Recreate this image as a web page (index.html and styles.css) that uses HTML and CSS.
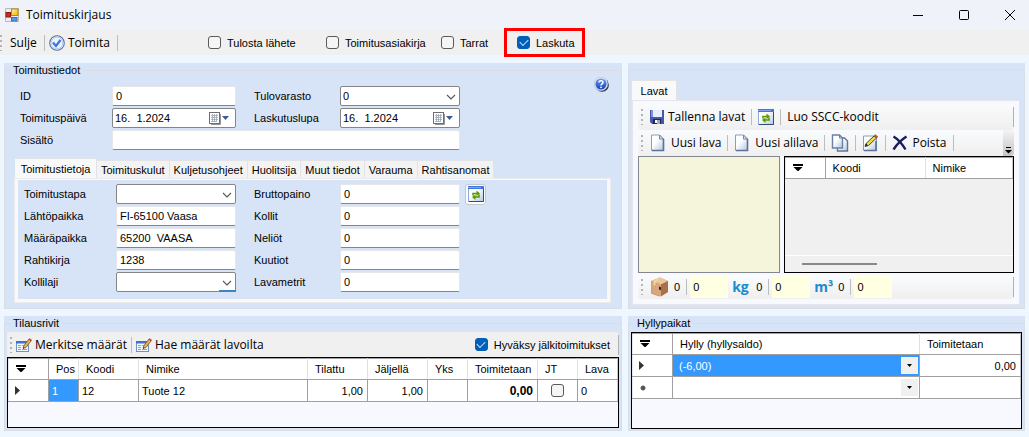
FILE: index.html
```html
<!DOCTYPE html>
<html lang="fi">
<head>
<meta charset="utf-8">
<title>Toimituskirjaus</title>
<link rel="stylesheet" href="styles.css">
</head>
<body>
<svg class="defs" aria-hidden="true">
  <defs>
    <linearGradient id="gy" x1="0" y1="0" x2="1" y2="1"><stop offset="0" stop-color="#fff3a0"/><stop offset="1" stop-color="#f5b400"/></linearGradient>
    <linearGradient id="gp" x1="0" y1="0" x2="1" y2="1"><stop offset="0.4" stop-color="#fdfeff"/><stop offset="1" stop-color="#b4c6e2"/></linearGradient>
    <linearGradient id="gb" x1="0" y1="0" x2="0" y2="1"><stop offset="0" stop-color="#6f9bf0"/><stop offset="1" stop-color="#1742b8"/></linearGradient>
  </defs>
  <symbol id="refresh" viewBox="0 0 16 16">
    <rect x="0.5" y="0.5" width="15" height="15" fill="url(#gp)" stroke="#8fa9d8"/>
    <path d="M0 0h16v3H0z" fill="#3f76dc"/><path d="M0 1h13v1H0z" fill="#7ea6f0"/>
    <path d="M15.5 3v12.5H1" fill="none" stroke="#2e4c7c"/>
    <path d="M5 9.500V7.500h4M11 8.500v2.500H7" fill="none" stroke="#5b9a00" stroke-width="1.600"/>
    <path d="M8.500 4.500l3.500 3-3.500 2.500zM7.500 8.500l-3.500 2.500 3.500 3z" fill="#5b9a00"/>
  </symbol>
  <symbol id="page" viewBox="0 0 16 18">
    <path d="M1.500 1h8l4 4v11.500h-12z" fill="url(#gp)" stroke="#8c9dba"/>
    <path d="M9.500 1v4h4z" fill="#d7e1f0" stroke="#7286a8"/>
    <path d="M13.500 5v11.500H2" fill="none" stroke="#5c7196" stroke-width="1.600"/>
  </symbol>
  <symbol id="edit" viewBox="0 0 16 14">
    <rect x="0.500" y="3.500" width="12" height="10" fill="#f3f8ff" stroke="#6f90c8"/>
    <path d="M0 3h13v2.500H0z" fill="#3e74c8"/>
    <path d="M2 7.500h3M2 9.500h3M2 11.500h3M6 7.500h3M6 11.500h5" stroke="#7ea3dc"/>
    <path d="M7 10.500l1-3 5-6.500 2.300 1.500-5.300 7z" fill="#e4b055" stroke="#7a5326" stroke-width="0.800"/>
    <path d="M12.500 1.500l1-1.300 2.300 1.500-1 1.500z" fill="#c8443a"/><path d="M7 10.500l.5-1.500 1 .9z" fill="#222"/>
  </symbol>
  <symbol id="filter" viewBox="0 0 10 8"><path d="M0 0h10v2H0zM0.500 3h9L5.500 7h-1z" fill="#000"/></symbol>
  <symbol id="chev" viewBox="0 0 10 6"><path d="M1 1l4 4 4-4" fill="none" stroke="#555" stroke-width="1.100"/></symbol>
  <symbol id="calendar" viewBox="0 0 20 13">
    <rect x="0.500" y="0.500" width="10" height="11" fill="#fff" stroke="#746c6c"/>
    <path d="M11.500 2v10.500H2" fill="none" stroke="#9a9494"/>
    <path d="M2 3.500h7M2 5.500h7M2 7.500h7M2 9.500h6M3.500 2v8M5.500 2v8M7.500 2v8" stroke="#9aa6b8" stroke-width="0.800"/>
    <path d="M13 4h7l-3.500 4z" fill="#3c5c92"/>
  </symbol>
  <symbol id="drop" viewBox="0 0 5 3"><path d="M0 0h5L2.500 3z" fill="#000"/></symbol>
  <symbol id="row" viewBox="0 0 5 9"><path d="M0 0v9l5-4.500z" fill="#333"/></symbol>
</svg>

<div class="window">
  <header class="titlebar">
    <svg class="app" viewBox="0 0 14 14" width="14" height="14"><path d="M.5.5h13v13H.5z" fill="#eee" stroke="#b8b8b8"/><rect x="6.500" y="1" width="6.500" height="6.500" fill="url(#gy)" stroke="#b98a10"/><rect x="1" y="4.500" width="4.500" height="4.500" fill="#d02818" stroke="#8f1a10"/><rect x="6.500" y="9.500" width="5.500" height="3.500" fill="#5c98ee" stroke="#3c6cc0"/></svg>
    <h1>Toimituskirjaus</h1>
    <div class="wincontrols">
      <button aria-label="Pienennä"><svg width="10" height="10"><path d="M0 5.500h10" stroke="#000"/></svg></button>
      <button aria-label="Suurenna"><svg width="10" height="10"><rect x="0.500" y="0.500" width="9" height="9" rx="1" fill="none" stroke="#000"/></svg></button>
      <button aria-label="Sulje ikkuna"><svg width="10" height="10"><path d="M0 0l10 10M10 0L0 10" stroke="#000"/></svg></button>
    </div>
  </header>

  <div class="commands">
    <i class="grip"></i>
    <button class="tool close">Sulje</button>
    <i class="sep"></i>
    <button class="tool deliver"><svg width="16" height="16" viewBox="0 0 16 16"><circle cx="8" cy="8" r="7.300" fill="#eaf2ff" stroke="#5a7198" stroke-width="1.100"/><circle cx="8" cy="8" r="5.800" fill="none" stroke="#b6cdf2"/><path d="M4 7.500l3 3.500 4.500-6" fill="none" stroke="#3f74e0" stroke-width="2.200"/></svg>Toimita</button>
    <i class="sep"></i>
    <div class="options">
      <label class="check o1"><input type="checkbox">Tulosta lähete</label>
      <label class="check o2"><input type="checkbox">Toimitusasiakirja</label>
      <label class="check o3"><input type="checkbox">Tarrat</label>
      <label class="check marked"><input type="checkbox" checked>Laskuta</label>
    </div>
  </div>

  <main class="panels">
    <section class="panel"><fieldset>
      <legend>Toimitustiedot</legend>
      <div class="top">
        <div class="form head">
          <label for="id">ID</label><input class="box" id="id" value="0">
          <label class="second" for="tv">Tulovarasto</label><span class="combo"><select id="tv"><option>0</option></select><svg><use href="#chev"/></svg></span>
          <label for="tp">Toimituspäivä</label><span class="combo date"><input id="tp" value="16.  1.2024"><svg><use href="#calendar"/></svg></span>
          <label class="second" for="ll">Laskutuslupa</label><span class="combo date"><input id="ll" value="16.  1.2024"><svg><use href="#calendar"/></svg></span>
          <label for="si">Sisältö</label><input class="box wide" id="si">
        </div>
        <button class="help" aria-label="Ohje"><svg width="15" height="15" viewBox="0 0 15 15"><circle cx="8" cy="8" r="6.800" fill="#1b2238"/><circle cx="7" cy="7" r="6.800" fill="#e8eefc" stroke="#a5b2d0" stroke-width="0.500"/><circle cx="7" cy="7" r="5.600" fill="url(#gb)"/><path d="M5 5.500c0-2.400 4-2.400 4 0 0 1.400-2 1.300-2 3" fill="none" stroke="#fff" stroke-width="1.500"/><circle cx="7" cy="10.300" r="0.900" fill="#fff"/></svg></button>
      </div>
      <div class="tabs" role="tablist">
        <button class="tab active" role="tab" aria-selected="true">Toimitustietoja</button><button class="tab" role="tab">Toimituskulut</button><button class="tab" role="tab">Kuljetusohjeet</button><button class="tab" role="tab">Huolitsija</button><button class="tab" role="tab">Muut tiedot</button><button class="tab" role="tab">Varauma</button><button class="tab" role="tab">Rahtisanomat</button>
      </div>
      <div class="tabpane"><div class="paneinner">
        <div class="form detail">
          <label for="tt">Toimitustapa</label><span class="combo"><select id="tt"><option></option></select><svg><use href="#chev"/></svg></span>
          <label class="second" for="bp">Bruttopaino</label><input class="box" id="bp" value="0">
          <button class="refresh" aria-label="Päivitä"><svg width="16" height="16"><use href="#refresh"/></svg></button>
          <label for="lp">Lähtöpaikka</label><input class="box" id="lp" value="FI-65100 Vaasa">
          <label class="second" for="ko">Kollit</label><input class="box" id="ko" value="0"><i></i>
          <label for="mp">Määräpaikka</label><input class="box" id="mp" value="65200  VAASA">
          <label class="second" for="ne">Neliöt</label><input class="box" id="ne" value="0"><i></i>
          <label for="rk">Rahtikirja</label><input class="box" id="rk" value="1238">
          <label class="second" for="ku">Kuutiot</label><input class="box" id="ku" value="0"><i></i>
          <label for="kl">Kollilaji</label><span class="combo hot"><select id="kl"><option></option></select><svg><use href="#chev"/></svg></span>
          <label class="second" for="lm">Lavametrit</label><input class="box" id="lm" value="0"><i></i>
        </div>
      </div></div>
    </fieldset></section>

    <section class="panel right"><fieldset class="untitled">
      <div class="tabs"><button class="tab active pallet">Lavat</button></div>
      <div class="palletpane">
        <div class="strip">
          <i class="grip"></i>
          <button class="tool"><svg width="14" height="14" viewBox="0 0 14 14"><path d="M0 0h14v14H2l-2-2z" fill="#4656a8"/><path d="M3 0h9v7H3z" fill="#e6edfb"/><path d="M1 0h2v7H1z" fill="#8090d8"/><path d="M3 9h8v5H3z" fill="#20284c"/><path d="M5 10h2v3H5z" fill="#fff"/><path d="M7 10h3v4H7z" fill="#9ba8c8"/></svg>Tallenna lavat</button>
          <i class="sep"></i>
          <button class="tool" aria-label="Päivitä lavat"><svg width="16" height="16"><use href="#refresh"/></svg></button>
          <i class="sep"></i>
          <button class="tool">Luo SSCC-koodit</button>
          <i class="edge"></i>
        </div>
        <div class="strip">
          <i class="grip"></i>
          <button class="tool page"><svg width="16" height="18"><use href="#page"/></svg>Uusi lava</button>
          <i class="sep"></i>
          <button class="tool page"><svg width="16" height="18"><use href="#page"/></svg>Uusi alilava</button>
          <i class="sep"></i>
          <button class="tool" aria-label="Kopioi"><svg width="18" height="18" viewBox="0 0 18 18"><path d="M6.500 4h7l3 3v10h-10z" fill="url(#gp)" stroke="#5f7598" stroke-width="1.400"/><path d="M1.500 1h7l3 3v10h-10z" fill="url(#gp)" stroke="#6c80a2" stroke-width="1.400"/><path d="M8.500 1v3h3" fill="none" stroke="#6c80a2"/></svg></button>
          <i class="sep"></i>
          <button class="tool" aria-label="Muokkaa"><svg width="17" height="18" viewBox="0 0 17 18"><path d="M1.500 2h13v14.500h-13z" fill="url(#gp)" stroke="#8c9dba"/><path d="M14 7v9.500H2" fill="none" stroke="#5c7196" stroke-width="1.600"/><path d="M3 12.500l1-3 8-7.500 2.500 2-8 7.500z" fill="#eedb3c" stroke="#222" stroke-width="0.800"/><path d="M12 1.500l1.200-1.200 3 2.500L15 4z" fill="#e23a28"/><path d="M3 12.500l1-3 2 1.800z" fill="#222"/></svg></button>
          <i class="sep"></i>
          <button class="tool"><svg width="16" height="16" viewBox="0 0 16 16"><path d="M1.500 1.500c5 3 9 8 12 13M14.500 1.500C9 5 5 9 1.500 14.500" fill="none" stroke="#171c5c" stroke-width="2.400"/></svg>Poista</button>
          <i class="sep"></i>
          <button class="overflow" aria-label="Lisää"><svg width="7" height="7" viewBox="0 0 7 7"><path d="M1 0h5v1H1zM0 3h7L3.500 6.500z" fill="#000"/></svg></button>
        </div>
        <div class="lists">
          <div class="tree"></div>
          <div class="grid small">
            <table><colgroup><col class="w40"><col class="w100"><col></colgroup>
            <thead><tr><th><svg class="filter"><use href="#filter"/></svg></th><th>Koodi</th><th>Nimike</th></tr></thead></table>
            <div class="hscroll"><i></i></div>
          </div>
        </div>
        <div class="strip totals">
          <i class="grip"></i>
          <svg width="19" height="20" viewBox="0 0 19 20"><path d="M1 4l9-3.500L18 4v11l-9 4.500-8-3z" fill="#c98f62"/><path d="M1 4l9-3.500L18 4l-7 3.500z" fill="#ecc79e"/><path d="M11 7.500L18 4v11l-7 4.500z" fill="#a96f48"/><path d="M1 4l10 3.500v12L1.500 16z" fill="#d8a67c"/><path d="M8 1.500L4.500 5.300v3" fill="none" stroke="#e9dca0" stroke-width="1.800"/><path d="M9 9.500l2 .7v3l-2-.7z" fill="#322"/></svg>
          <span class="num">0</span><i class="sep"></i><output>0</output>
          <b class="unit">kg</b><span class="num">0</span><i class="sep"></i><output>0</output>
          <b class="unit">m³</b><span class="num">0</span><i class="sep"></i><output>0</output>
          <i class="edge"></i>
        </div>
      </div>
    </fieldset></section>

    <section class="panel lower"><fieldset>
      <legend>Tilausrivit</legend>
      <div class="orders">
        <div class="bar">
          <i class="grip"></i>
          <button class="tool"><svg width="16" height="14"><use href="#edit"/></svg>Merkitse määrät</button>
          <i class="sep"></i>
          <button class="tool"><svg width="16" height="14"><use href="#edit"/></svg>Hae määrät lavoilta</button>
          <label class="check accept"><input type="checkbox" checked>Hyväksy jälkitoimitukset</label>
          <i class="edge"></i>
        </div>
        <div class="grid">
          <table>
            <colgroup><col class="w40"><col class="w30"><col class="w60"><col><col class="w60"><col class="w60"><col class="w40"><col class="w70"><col class="w40"><col class="w40"></colgroup>
            <thead><tr><th><svg class="filter"><use href="#filter"/></svg></th><th>Pos</th><th>Koodi</th><th>Nimike</th><th>Tilattu</th><th>Jäljellä</th><th>Yks</th><th>Toimitetaan</th><th>JT</th><th>Lava</th></tr></thead>
            <tbody><tr><th scope="row"><svg class="rowmark"><use href="#row"/></svg></th><td class="sel">1</td><td>12</td><td>Tuote 12</td><td class="r">1,00</td><td class="r">1,00</td><td></td><td class="r bold">0,00</td><td class="c"><input type="checkbox" aria-label="JT"></td><td>0</td></tr></tbody>
          </table>
        </div>
      </div>
    </fieldset></section>

    <section class="panel lower"><fieldset>
      <legend>Hyllypaikat</legend>
      <div class="grid shelves">
        <table>
          <colgroup><col class="w40"><col><col class="w101"></colgroup>
          <thead><tr><th><svg class="filter"><use href="#filter"/></svg></th><th>Hylly (hyllysaldo)</th><th>Toimitetaan</th></tr></thead>
          <tbody>
            <tr><th scope="row"><svg class="rowmark"><use href="#row"/></svg></th><td class="sel"><div class="pick"><span>(-6,00)</span><button aria-label="Valitse hylly"><svg width="5" height="3"><use href="#drop"/></svg></button></div></td><td class="r">0,00</td></tr>
            <tr><th scope="row"><svg class="new" viewBox="0 0 6 6"><circle cx="3" cy="3" r="2" fill="#444"/><path d="M3 0v6M0 3h6M1 1l4 4M5 1L1 5" stroke="#555" stroke-width="0.800"/></svg></th><td><div class="pick"><span></span><button aria-label="Valitse hylly"><svg width="5" height="3"><use href="#drop"/></svg></button></div></td><td></td></tr>
          </tbody>
        </table>
      </div>
    </fieldset></section>
  </main>
</div>
</body>
</html>
```

FILE: styles.css
```css
* { box-sizing: border-box; }
body { margin: 0; background: #eef7ff; color: #000; font: 11px/14px "Liberation Sans", Arial, sans-serif; }
button, input, select { margin: 0; padding: 0; border: 0; background: none; color: inherit; font: inherit; }
svg { display: block; flex: none; }
.defs { position: absolute; width: 0; height: 0; }
.window { min-height: 100vh; background: #eef7ff; }

.titlebar { display: flex; align-items: center; height: 30px; padding: 0 4px 0 5px; background: #eff3f9; }
.titlebar h1 { margin: 0 0 0 7px; font: 12px/16px "Open Sans", sans-serif; }
.wincontrols { display: flex; gap: 16px; margin-left: auto; }
.wincontrols button { display: grid; place-items: center; width: 30px; height: 28px; }

.commands { display: flex; align-items: center; height: 25px; background: #f0f0f0; }
.grip { flex: none; width: 2px; height: 16px; background: repeating-linear-gradient(#b4b4b4 0 2px, transparent 2px 5px); }
.sep { flex: none; width: 1px; height: 16px; background: #bdbdbd; }
.tool { display: flex; align-items: center; gap: 4px; font: 12px/18px "Open Sans", sans-serif; white-space: nowrap; }
.close { width: 42px; padding-left: 8px; }
.deliver { width: 72px; padding-left: 4px; gap: 3px; }
.options { display: flex; align-items: center; padding-left: 90px; }
.check { display: flex; align-items: center; gap: 6px; white-space: nowrap; }
.o1 { width: 118px; }
.o2 { width: 115px; }
.o3 { width: 66px; }
.marked { position: relative; z-index: 1; width: 75px; height: 23px; padding-left: 10px; outline: 3px solid #f00; }
input[type="checkbox"] { display: grid; place-items: center; flex: none; width: 13px; height: 13px; appearance: none; border: 1px solid #5a5a5a; border-radius: 3px; background: #f5f5f5; }
input[type="checkbox"]:checked { border-color: #005fb8; background: #005fb8; }
input[type="checkbox"]:checked::before { content: ""; width: 7px; height: 4px; margin-bottom: 2px; border: solid #cfe2f4; border-width: 0 0 1px 1px; transform: rotate(-45deg); }

.panels { display: grid; grid-template-columns: 618fr 397fr; gap: 7px 6px; padding: 8px 4px 6px; }
.panel { min-width: 0; background: #d7e4f7; }
fieldset { min-width: 0; height: 100%; margin: 0; padding: 0; border: 1px solid #dadde2; }
legend { margin-left: 6px; padding: 0 2px; line-height: 14px; }
.right { padding-top: 6px; }

.top { display: flex; justify-content: space-between; padding: 0 12px 0 15px; }
.form { display: grid; grid-auto-rows: 20px; row-gap: 2px; align-items: center; }
.head { grid-template-columns: 92px 124px 104px 120px; padding-top: 9px; }
.detail { grid-template-columns: 92px 120px 104px 120px 26px; justify-content: start; }
.second { padding-left: 18px; }
.box { width: 100%; height: 20px; padding: 0 3px 1px; border: 1px solid #e4e6ea; border-bottom-color: #858585; border-radius: 2px; background: #fff; }
.wide { grid-column: 2 / 5; }
.combo { position: relative; display: block; height: 20px; border: 1px solid #858585; border-radius: 2px; background: #fff; }
.combo select, .combo input { display: block; width: 100%; height: 18px; padding: 0 20px 1px 2px; appearance: none; }
.combo svg { position: absolute; top: 7px; right: 3px; width: 10px; height: 6px; pointer-events: none; }
.date svg { top: 3px; right: 6px; width: 20px; height: 13px; }
.hot::after { content: ""; position: absolute; right: -1px; bottom: -1px; width: 17px; height: 2px; background: #3d85bd; }
.help { align-self: start; }
.refresh { display: grid; place-items: center; justify-self: end; width: 21px; height: 21px; border: 1px solid #c4c8ce; border-radius: 3px; background: #fdfdfd; }

.tabs { display: flex; align-items: flex-end; height: 20px; margin: 8px 0 0 10px; }
.tab { height: 18px; padding: 0 4px; border: 1px solid #e2e3e6; border-width: 1px 1px 0 0; background: #f3f3f3; white-space: nowrap; }
.tab.active { width: 82px; height: 20px; background: #f9f9f9; }
.tabpane { margin: 0 10px 5px 9px; padding: 1px 3px 3px; border: 1px solid #ececec; background: #f9f9f9; }
.paneinner { padding: 4px 6px 7px; background: #d7e4f7; }

.untitled .tabs { margin: 10px 0 0 3px; }
.tab.pallet { width: 45px; }
.palletpane { margin: 0 4px 3px 3px; padding: 3px 5px 5px; border: 1px solid #e6e6ea; background: #f8f9ff; }
.strip { display: flex; align-items: center; height: 26px; padding-left: 3px; border-radius: 4px; background: linear-gradient(#fafbfe, #efefef); }
.strip > * { margin-right: 6px; }
.page { gap: 5px; }
.strip > .grip { margin-right: 7px; }
.strip > .edge, .bar > .edge { width: 1px; height: 20px; margin: 0 0 0 auto; background: #b0b0b0; }
.strip > .overflow { display: grid; place-items: end center; align-self: stretch; width: 11px; margin: 0 0 0 auto; padding-bottom: 2px; border-radius: 0 4px 4px 0; background: linear-gradient(#f4f4f4, #c4c4c4); }
.lists { display: grid; grid-template-columns: 142fr 231fr; gap: 4px; height: 117px; }
.tree { border: 1px solid #828790; background: #f5f5dc; }
.totals { height: 24px; margin-top: 2px; }
.totals output { width: 38px; height: 22px; margin-right: 4px; padding-left: 3px; background: #ffffe1; line-height: 22px; }
.totals .sep { margin-right: 3px; }
.totals svg { margin-right: 5px; }
.unit { width: 18px; color: #1c8acb; font: bold 14px/18px "Open Sans", sans-serif; }

.grid { border: 1px solid #000; background: #f8f9ff; }
.grid table { width: 100%; border-collapse: collapse; table-layout: fixed; background: #fff; }
.grid th, .grid td { height: 22px; padding: 0 4px 0 3px; border: 1px solid #a0a0a0; font-weight: normal; text-align: left; white-space: nowrap; }
.grid thead th { height: 21px; padding-left: 7px; border-right-color: #e0e0e0; }
.grid thead th:first-child { border-right-color: #a0a0a0; }
.grid tr > :first-child { border-left-color: #e8e8e8; }
.grid tr > :last-child { border-right-color: #c8c8c8; }
.grid td.r { text-align: right; }
.grid td.bold { font-weight: bold; font-size: 12px; }
.grid td.c input { margin: 0 auto; }
.grid td.sel { background: #3399ff; color: #fff; }
.filter { width: 10px; height: 8px; }
.rowmark { width: 5px; height: 9px; margin-left: 3px; }
.new { width: 6px; height: 6px; margin-left: 4px; }
.w30 { width: 30px; }
.w40 { width: 40px; }
.w60 { width: 60px; }
.w70 { width: 70px; }
.w100 { width: 100px; }
.w101 { width: 101px; }
.small { display: flex; flex-direction: column; background: #f0f0f0; overflow: hidden; }
.hscroll { height: 17px; margin-top: auto; padding: 7px 0 0 17px; border-top: 1px solid #fff; }
.hscroll i { display: block; width: 75px; height: 2px; background: #868a86; }

.lower { height: 115px; }
.orders { padding: 2px 2px 0; }
.bar { display: flex; align-items: center; height: 25px; padding-left: 3px; border-radius: 0 4px 0 0; background: #f0f0f0; }
.bar > * { margin-right: 4px; }
.bar > .tool { gap: 3px; }
.bar > .accept { margin: 0 8px 0 auto; }
.bar > .edge { margin: 0; }
.orders .grid { height: 71px; }
.shelves { height: 97px; margin: 2px 2px 0; }
.pick { display: flex; align-items: center; justify-content: space-between; margin-right: -3px; padding-left: 3px; }
.pick button { display: grid; place-items: center; width: 17px; height: 17px; background: #f0f0f0; }
```
